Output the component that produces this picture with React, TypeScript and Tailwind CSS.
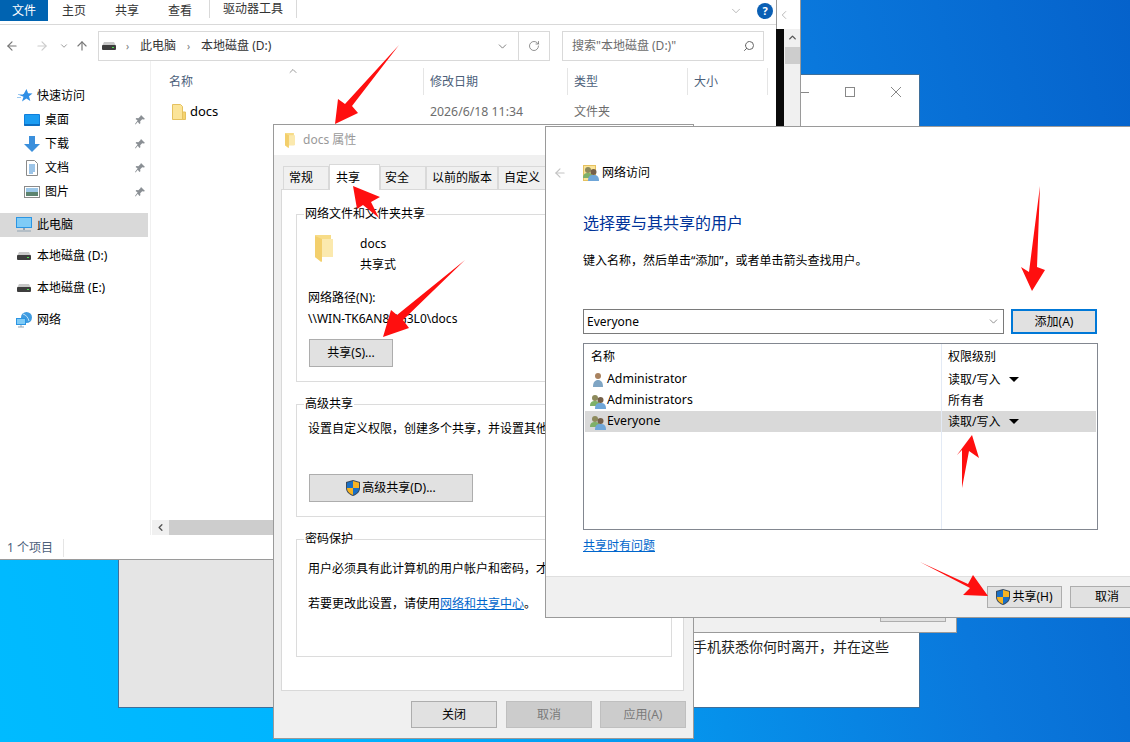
import { ArrowLeft, ArrowRight, ArrowUp, ChevronDown, ChevronLeft, ChevronUp, RotateCw, Search } from 'lucide-react';

// ---------------------------------------------------------------------------
// Icons
// ---------------------------------------------------------------------------

function Pin() {
  return (
    <svg width="12" height="12" viewBox="0 0 12 12" className="mr-[2px] ml-auto">
      <path d="M7 1l4 4-1.2.6-1.6-.4-2 2 .2 2-1 .8-1.6-2.2L1.5 10.5 1 10l2.6-3.4L1.6 5l.8-1 2 .2 2-2z" fill="#8a8f94" />
    </svg>
  );
}

function Star() {
  return (
    <svg width="16" height="16" viewBox="0 0 16 16">
      <path d="M9.5 1l1.6 4.3 4.4.2-3.5 2.8 1.3 4.7-3.9-2.6-4.4 3.1 1.5-4.8L1 6.5l5.7-.5z" fill="#2f8fe6" />
      <path d="M1 6.5h5M0 9.5h4" stroke="#9cc9f0" />
    </svg>
  );
}

function DesktopIcon() {
  return (
    <svg width="16" height="12" viewBox="0 0 16 12">
      <rect width="16" height="12" rx="1" fill="#0f7fdc" />
      <rect x="1" y="1" width="14" height="9" fill="#1c9df2" />
      <path d="M0 11h16" stroke="#0a5ea8" />
    </svg>
  );
}

function DownloadIcon() {
  return (
    <svg width="16" height="16" viewBox="0 0 16 16">
      <path d="M5 0h6v8h5l-8 8-8-8h5z" fill="#3a8fdc" />
    </svg>
  );
}

function DocIcon() {
  return (
    <svg width="16" height="16" viewBox="0 0 16 16">
      <path d="M2.5.5h8l3 3v12h-11z" fill="#fff" stroke="#8a8a8a" />
      <path d="M5 5h6M5 7h6M5 9h6M5 11h6M5 13h4" stroke="#3b8ad0" />
    </svg>
  );
}

function PictureIcon() {
  return (
    <svg width="16" height="12" viewBox="0 0 16 12">
      <rect x=".5" y=".5" width="15" height="11" fill="#fff" stroke="#8a8a8a" />
      <rect x="2" y="2" width="12" height="4" fill="#9cc7e8" />
      <rect x="2" y="6" width="12" height="4" fill="#5d8470" />
    </svg>
  );
}

function PcIcon() {
  return (
    <svg width="16" height="16" viewBox="0 0 16 16">
      <rect width="16" height="11" fill="#2b95e3" />
      <rect x="1" y="1" width="14" height="9" fill="#7fcbf6" />
      <path d="M7 11h2v2H7z" fill="#8fa3b3" />
      <path d="M1 14h14" stroke="#8fa3b3" />
    </svg>
  );
}

function DriveIcon() {
  return (
    <svg width="14" height="8" viewBox="0 0 14 8">
      <path d="M2 0h10l2 4H0z" fill="#c8c8c8" />
      <rect y="3" width="14" height="5" rx="1" fill="#3d3d3d" />
      <rect x="10" y="5" width="2" height="1" fill="#4ee04e" />
    </svg>
  );
}

function NetworkIcon() {
  return (
    <svg width="16" height="16" viewBox="0 0 16 16">
      <circle cx="10.5" cy="5.5" r="5.5" fill="#3f9be0" />
      <path d="M7 2c3 1 5 3 6 7" stroke="#bfe3f8" fill="none" />
      <rect y="6" width="10" height="7" fill="#2b95e3" />
      <rect x="1" y="7" width="8" height="5" fill="#7fcbf6" />
      <path d="M2 15h6M5 13v2" stroke="#8fa3b3" />
    </svg>
  );
}

function Folder({ w, h }: { w: number; h: number }) {
  return (
    <svg width={w} height={h} viewBox="0 0 14 16">
      <path d="M.5.5h8l2 2v13H.5z" fill="#fbe499" stroke="#e5c15f" />
      <path d="M10.5 8h3v7.5h-3z" fill="#f5d36f" stroke="#e5c15f" />
    </svg>
  );
}

function OpenFolder({ w, h }: { w: number; h: number }) {
  return (
    <svg width={w} height={h} viewBox="0 0 18 27">
      <path d="M0 0h16v22H7l-1 5-6-5z" fill="#f7dc88" />
      <path d="M7 4h11v18H7z" fill="#fbe9ae" />
      <path d="M0 1l7 3v23L0 22z" fill="#f3cf6c" />
    </svg>
  );
}

function Shield({ size = 14 }: { size?: number }) {
  return (
    <svg width={size} height={size + 2} viewBox="0 0 14 16" className="shrink-0">
      <path d="M7 0l7 2v6c0 4-3 6.500-7 8-4-1.500-7-4-7-8V2z" fill="#3a4a5c" />
      <path d="M7 1L1 2.700V8h6z" fill="#1a6fc4" />
      <path d="M7 1l6 1.700V8H7z" fill="#f7b321" />
      <path d="M1 8h6v7c-3.400-1.300-6-3.500-6-7z" fill="#f7b321" />
      <path d="M13 8H7v7c3.400-1.300 6-3.500 6-7z" fill="#1a6fc4" />
    </svg>
  );
}

function User() {
  return (
    <svg width="16" height="16" viewBox="0 0 16 16" className="shrink-0">
      <circle cx="8" cy="4" r="3" fill="#a9825f" />
      <path d="M3 15c0-5 2-7 5-7s5 2 5 7z" fill="#7fa5c4" />
    </svg>
  );
}

function Users({ framed }: { framed?: boolean }) {
  return (
    <svg width="16" height="16" viewBox="0 0 16 16" className="shrink-0">
      {framed && <rect x=".5" y=".5" width="12" height="15" fill="#fbe499" stroke="#e5c15f" />}
      <circle cx="5" cy="5" r="3" fill="#8d8a5c" />
      <path d="M0 13c0-4 2-5 5-5s5 1 5 5z" fill="#7fb069" />
      <circle cx="10.500" cy="7" r="3" fill="#75604a" />
      <path d="M5 16c0-5 2-6 5.500-6s5.500 1 5.500 6z" fill="#6fa6d8" />
    </svg>
  );
}

// ---------------------------------------------------------------------------
// Explorer
// ---------------------------------------------------------------------------

const QUICK = [
  { label: '桌面', icon: <DesktopIcon /> },
  { label: '下载', icon: <DownloadIcon /> },
  { label: '文档', icon: <DocIcon /> },
  { label: '图片', icon: <PictureIcon /> },
];

function Sidebar() {
  return (
    <div className="flex w-[151px] shrink-0 flex-col border-r border-[#f0f0f0] pt-[23px] text-[12px] text-black">
      <div className="flex h-6 items-center gap-[4px] pl-[17px]">
        <Star />
        快速访问
      </div>
      {QUICK.map(q => (
        <div key={q.label} className="flex h-6 items-center pr-[2px] pl-6">
          <span className="flex w-[21px] shrink-0 items-center">{q.icon}</span>
          {q.label}
          <Pin />
        </div>
      ))}
      <div className="mt-[9px] flex h-6 w-[148px] items-center gap-[5px] bg-[#d9d9d9] pl-4">
        <PcIcon />
        此电脑
      </div>
      <div className="mt-[7px] flex h-6 items-center gap-[6px] pl-[17px]">
        <DriveIcon />
        本地磁盘 (D:)
      </div>
      <div className="mt-2 flex h-6 items-center gap-[6px] pl-[17px]">
        <DriveIcon />
        本地磁盘 (E:)
      </div>
      <div className="mt-2 flex h-6 items-center gap-[5px] pl-4">
        <NetworkIcon />
        网络
      </div>
    </div>
  );
}

function FileList() {
  return (
    <div className="relative flex min-w-0 flex-1 flex-col pt-[7px] text-[12px]">
      <ChevronUp size={12} strokeWidth={1.2} className="absolute top-1 left-[136px] text-[#555]" />
      <div className="flex h-[27px] items-center text-[#4c607a]">
        <div className="flex h-full w-[273px] items-center border-r border-[#e5e5e5] pl-[18px]">名称</div>
        <div className="flex h-full w-[144px] items-center border-r border-[#e5e5e5] pl-[6px]">修改日期</div>
        <div className="flex h-full w-[120px] items-center border-r border-[#e5e5e5] pl-[6px]">类型</div>
        <div className="flex h-full w-[80px] items-center border-r border-[#e5e5e5] pl-[6px]">大小</div>
      </div>
      <div className="mt-[5px] flex h-6 items-center text-[#6d6d6d]">
        <div className="flex w-[273px] items-center gap-[4px] pl-[21px] text-[13px] text-black">
          <Folder w={14} h={16} />
          docs
        </div>
        <div className="w-[144px] pl-[6px] text-[12.3px]">2026/6/18 11:34</div>
        <div className="pl-[6px]">文件夹</div>
      </div>
      <div className="mt-auto flex h-[15px] items-stretch pl-px">
        <div className="flex w-[17px] items-center justify-center bg-[#f0f0f0]">
          <ChevronLeft size={11} strokeWidth={3} className="text-[#555]" />
        </div>
        <div className="flex-1 bg-[#cdcdcd]" />
      </div>
    </div>
  );
}

function Explorer() {
  return (
    <div className="absolute top-0 left-0 flex h-[560px] w-[801px] border-r border-b border-[#9a9a9a] bg-white">
      <div className="flex w-[776px] flex-col">
        {/* ribbon */}
        <div className="flex h-[25px] shrink-0 items-start border-b border-[#d9d9d9] text-[12px] text-[#333]">
          <div className="flex h-[21px] w-12 items-center justify-center bg-[#0063b1] text-white">文件</div>
          <div className="flex h-[21px] items-center gap-[29px] pl-[14px]">
            <span>主页</span>
            <span>共享</span>
            <span>查看</span>
          </div>
          <div className="ml-[17px] flex h-[18px] items-center border-x border-[#d9d9d9] px-[13px]">驱动器工具</div>
          <ChevronDown size={14} strokeWidth={1} className="mt-1 ml-auto text-[#888]" />
          <div className="mt-[3px] mr-[3px] ml-[14px] flex h-4 w-4 items-center justify-center rounded-full bg-[#0a5fb4] text-[11px] font-bold text-white">?</div>
        </div>
        {/* address row */}
        <div className="flex h-[36px] shrink-0 items-end pl-[5px] text-[#333]">
          <div className="flex h-[30px] w-[93px] shrink-0 items-center">
            <ArrowLeft size={14} strokeWidth={2} className="text-[#777]" />
            <ArrowRight size={14} strokeWidth={2} className="ml-4 text-[#ccc]" />
            <ChevronDown size={10} strokeWidth={2} className="ml-[10px] text-[#888]" />
            <ArrowUp size={14} strokeWidth={2} className="ml-[6px] text-[#777]" />
          </div>
          <div className="flex h-[30px] w-[452px] shrink-0 items-center border border-[#d9d9d9] text-[12px]">
            <span className="ml-[3px]"><DriveIcon /></span>
            <span className="mr-[12px] ml-[10px] w-[2px] text-[10px] text-[#777]">›</span>
            此电脑
            <span className="mx-[11px] w-[3px] text-[10px] text-[#777]">›</span>
            本地磁盘 (D:)
            <div className="ml-auto flex h-full items-center">
              <ChevronDown size={13} strokeWidth={1.5} className="mr-[9px] text-[#666]" />
              <div className="flex h-full w-[31px] items-center justify-center border-l border-[#d9d9d9]">
                <RotateCw size={12} strokeWidth={1.6} className="text-[#777]" />
              </div>
            </div>
          </div>
          <div className="ml-[12px] flex h-[30px] w-[202px] shrink-0 items-center justify-between border border-[#d9d9d9] pr-[8px] pl-[9px] text-[12px] text-[#6d6d6d]">
            搜索"本地磁盘 (D:)"
            <Search size={12} strokeWidth={2} className="-scale-x-100 text-[#666]" />
          </div>
        </div>
        {/* body */}
        <div className="flex min-h-0 flex-1">
          <Sidebar />
          <FileList />
        </div>
        {/* status */}
        <div className="flex h-6 shrink-0 items-center pt-[2px] text-[12px] text-[#4c607a]">
          <span className="border-r border-[#e5e5e5] pr-[10px] pl-[7px]">1 个项目</span>
        </div>
      </div>
      {/* right edge */}
      <div className="flex w-6 flex-col">
        <div className="flex h-[29px] shrink-0 items-center border-l border-[#9a9a9a] text-[#888]">
          <ChevronLeft size={14} strokeWidth={1} />
        </div>
        <div className="flex flex-1">
          <div className="w-[8px] bg-[#0a0a0a]" />
          <div className="flex w-4 flex-col items-center bg-[#f0f0f0]">
            <ChevronUp size={11} strokeWidth={3} className="mt-[3px] text-[#555]" />
            <div className="mt-[4px] h-[17px] w-[15px] bg-[#cdcdcd]" />
          </div>
        </div>
      </div>
    </div>
  );
}

// ---------------------------------------------------------------------------
// Windows behind
// ---------------------------------------------------------------------------

function BackWindow() {
  return (
    <div className="absolute top-[74px] left-[118px] h-[634px] w-[802px] border border-[#3f6f9a] bg-white">
      <div className="absolute top-[12px] right-[18px] flex items-center gap-[36px]">
        <span className="h-px w-[10px] bg-[#888]" />
        <span className="h-[10px] w-[10px] border border-[#888]" />
        <svg width="10" height="10" viewBox="0 0 10 10"><path d="M0 0l10 10M10 0L0 10" stroke="#888" /></svg>
      </div>
      <div className="absolute bottom-0 left-0 h-[148px] w-[200px] bg-[#e5e5e5]" />
      <div className="absolute top-[561px] left-[574px] text-[14px] whitespace-nowrap text-[#222]">手机获悉你何时离开，并在这些</div>
    </div>
  );
}

function BandWindow() {
  return (
    <div className="absolute top-[540px] left-[600px] flex h-[93px] w-[357px] items-end justify-end border border-[#9a9a9a] bg-[#f0f0f0] pr-[10px] pb-[10px]">
      <div className="h-[20px] w-[66px] border border-[#adadad] bg-[#e1e1e1]" />
    </div>
  );
}

// ---------------------------------------------------------------------------
// Properties dialog
// ---------------------------------------------------------------------------

function Btn({ children, className }: { children: React.ReactNode; className: string }) {
  return (
    <div className={`flex items-center justify-center border border-[#adadad] bg-[#e1e1e1] text-[12px] text-black ${className}`}>
      {children}
    </div>
  );
}

function Group({ title, className, children }: { title: string; className: string; children: React.ReactNode }) {
  return (
    <div className={`relative border border-[#dcdcdc] ${className}`}>
      <span className="absolute -top-[9px] left-[7px] bg-white px-px text-[12px] leading-[16px]">{title}</span>
      {children}
    </div>
  );
}

function PropertiesDialog() {
  return (
    <div className="absolute top-[124px] left-[273px] flex h-[615px] w-[421px] flex-col border border-[#9a9a9a] bg-[#f0f0f0] font-['Noto_Sans','Noto_Sans_CJK_SC',sans-serif] text-black">
      <div className="flex h-[30px] shrink-0 items-center gap-[7px] bg-white pl-[10px] text-[12px] text-[#999]">
        <OpenFolder w={12} h={15} />
        docs 属性
      </div>
      <div className="flex h-[34px] shrink-0 items-end pl-[9px] text-[12px]">
        <div className="flex h-[23px] w-[46px] items-center border border-b-0 border-[#d9d9d9] pl-[5px]">常规</div>
        <div className="z-10 -mb-px flex h-[26px] w-[51px] items-center border border-b-0 border-[#d9d9d9] bg-white pl-[6px]">共享</div>
        <div className="flex h-[23px] w-[46px] items-center border border-b-0 border-[#d9d9d9] pl-[4px]">安全</div>
        <div className="flex h-[23px] w-[72px] items-center justify-center border border-b-0 border-[#d9d9d9]">以前的版本</div>
        <div className="flex h-[23px] w-[48px] items-center justify-center border border-b-0 border-[#d9d9d9]">自定义</div>
      </div>
      <div className="ml-[7px] flex h-[502px] w-[403px] shrink-0 flex-col border border-[#d9d9d9] bg-white pt-[24px] pr-[11px] pl-[14px] text-[12px]">
        <Group title="网络文件和文件夹共享" className="h-[168px] shrink-0">
          <div className="flex items-start pt-[20px] pl-[18px]">
            <OpenFolder w={18} h={27} />
            <div className="mt-[1px] ml-[27px] flex flex-col gap-[5px] leading-[16px]">
              <span>docs</span>
              <span>共享式</span>
            </div>
          </div>
          <div className="mt-[17px] pl-[11px] leading-[16px]">网络路径(N):</div>
          <div className="mt-[5px] pl-[11px] leading-[16px]">\\WIN-TK6AN8GG3L0\docs</div>
          <Btn className="mt-[12px] ml-[12px] h-[28px] w-[84px]">共享(S)...</Btn>
        </Group>
        <Group title="高级共享" className="mt-[22px] h-[113px] shrink-0">
          <div className="mt-[16px] pl-[11px] leading-[16px] whitespace-nowrap">设置自定义权限，创建多个共享，并设置其他高级共享选项。</div>
          <Btn className="mt-[37px] ml-[12px] h-[28px] w-[164px] gap-[2px]">
            <Shield />
            高级共享(D)...
          </Btn>
        </Group>
        <Group title="密码保护" className="mt-[22px] h-[118px] shrink-0">
          <div className="mt-[21px] pl-[11px] leading-[16px] whitespace-nowrap">用户必须具有此计算机的用户帐户和密码，才能访问共享文件夹。</div>
          <div className="mt-[19px] pl-[11px] leading-[16px] whitespace-nowrap">
            若要更改此设置，请使用<span className="text-[#0066cc] underline">网络和共享中心</span>。
          </div>
        </Group>
      </div>
      <div className="mt-[10px] flex gap-[8px] pl-[137px]">
        <Btn className="h-[27px] w-[86px]">关闭</Btn>
        <Btn className="ml-px h-[27px] w-[86px] border-[#bfbfbf] !bg-[#cccccc] !text-[#7a7a7a]">取消</Btn>
        <Btn className="h-[27px] w-[86px] border-[#bfbfbf] !bg-[#cccccc] !text-[#7a7a7a]">应用(A)</Btn>
      </div>
    </div>
  );
}

// ---------------------------------------------------------------------------
// Share dialog
// ---------------------------------------------------------------------------

const ROWS = [
  { name: 'Administrator', level: '读取/写入', caret: true, icon: <User /> },
  { name: 'Administrators', level: '所有者', caret: false, icon: <Users /> },
  { name: 'Everyone', level: '读取/写入', caret: true, icon: <Users />, selected: true },
];

function ShareDialog() {
  return (
    <div className="absolute top-[126px] left-[545px] flex h-[492px] w-[600px] flex-col border border-[#9a9a9a] bg-white font-['Noto_Sans','Noto_Sans_CJK_SC',sans-serif] text-[12px] text-black">
      <div className="flex h-[449px] shrink-0 flex-col pl-[37px]">
        <div className="mt-[38px] -ml-[30px] flex h-4 items-center">
          <ArrowLeft size={14} strokeWidth={2} className="text-[#c4c4c4]" />
          <span className="ml-[16px] flex items-center gap-[3px]">
            <Users framed />
            网络访问
          </span>
        </div>
        <div className="mt-[31px] text-[16px] leading-[22px] text-[#003399]">选择要与其共享的用户</div>
        <div className="mt-[19px] leading-[16px]">键入名称，然后单击“添加”，或者单击箭头查找用户。</div>
        <div className="mt-[40px] flex items-start">
          <div className="flex h-[25px] w-[421px] items-center justify-between border border-[#7a7a7a] pr-[3px] pl-[3px]">
            Everyone
            <ChevronDown size={13} strokeWidth={1.2} className="text-[#555]" />
          </div>
          <div className="ml-[7px] flex h-[25px] w-[86px] items-center justify-center border-2 border-[#0078d7] bg-[#e1e1e1]">添加(A)</div>
        </div>
        <div className="mt-[9px] flex h-[187px] w-[515px] flex-col border border-[#828790] px-px">
          <div className="flex h-[25px] shrink-0">
            <div className="flex w-[357px] items-center border-r border-[#e3eaf5] pl-[6px]">名称</div>
            <div className="flex items-center pl-[6px]">权限级别</div>
          </div>
          {ROWS.map(r => (
            <div key={r.name} className={`flex h-[21px] shrink-0 items-center ${r.selected ? 'bg-[#d9d9d9]' : ''}`}>
              <div className="flex h-full w-[357px] items-center gap-[1px] border-r border-[#e3eaf5] pl-[5px] text-[12.3px]">
                {r.icon}
                {r.name}
              </div>
              <div className="flex items-center pl-[6px]">
                {r.level}
                {r.caret && <span className="ml-[9px] h-0 w-0 border-x-[5px] border-t-[5px] border-x-transparent border-t-black" />}
              </div>
            </div>
          ))}
          <div className="flex flex-1">
            <div className="w-[357px] border-r border-[#e3eaf5]" />
          </div>
        </div>
        <div className="mt-[8px] leading-[16px] text-[#0066cc] underline">共享时有问题</div>
      </div>
      <div className="flex flex-1 items-start border-t border-[#dfdfdf] bg-[#f0f0f0] pt-[9px] pl-[441px]">
        <div className="flex h-[22px] w-[76px] items-center justify-center gap-[2px] border border-[#adadad] bg-[#e1e1e1]">
          <Shield />
          共享(H)
        </div>
        <div className="ml-[8px] flex h-[22px] w-[75px] items-center justify-center border border-[#adadad] bg-[#e1e1e1]">取消</div>
      </div>
    </div>
  );
}

// ---------------------------------------------------------------------------
// Red annotation arrows
// ---------------------------------------------------------------------------

const ARROWS = [
  '399,45 352,106 358,113 335,124 338,99 345,104',
  '353,186 380,197 371,202 379,218 363,205 357,209',
  '465,260 403,320 409,328 383,337 391,310 397,315',
  '1040,186 1037,267 1045,270 1032,291 1021,267 1029,272',
  '972,435 979,458 969,451 962,488 962,450 957,455',
  '920,562 968,584 973,575 988,596 963,595 970,588',
];

function Arrows() {
  return (
    <svg width="1130" height="742" viewBox="0 0 1130 742" className="pointer-events-none absolute inset-0 z-50">
      {ARROWS.map(p => (
        <polygon key={p} points={p} fill="#ff0f0f" />
      ))}
    </svg>
  );
}

export default function App() {
  return (
    <div className="relative h-[742px] w-[1130px] overflow-hidden bg-[linear-gradient(75deg,#00bbff_0%,#00b4ff_25%,#0a78dc_75%,#0562cb_100%)] font-['Noto_Sans','Noto_Sans_CJK_SC',sans-serif]">
      <BackWindow />
      <BandWindow />
      <Explorer />
      <PropertiesDialog />
      <ShareDialog />
      <Arrows />
    </div>
  );
}
